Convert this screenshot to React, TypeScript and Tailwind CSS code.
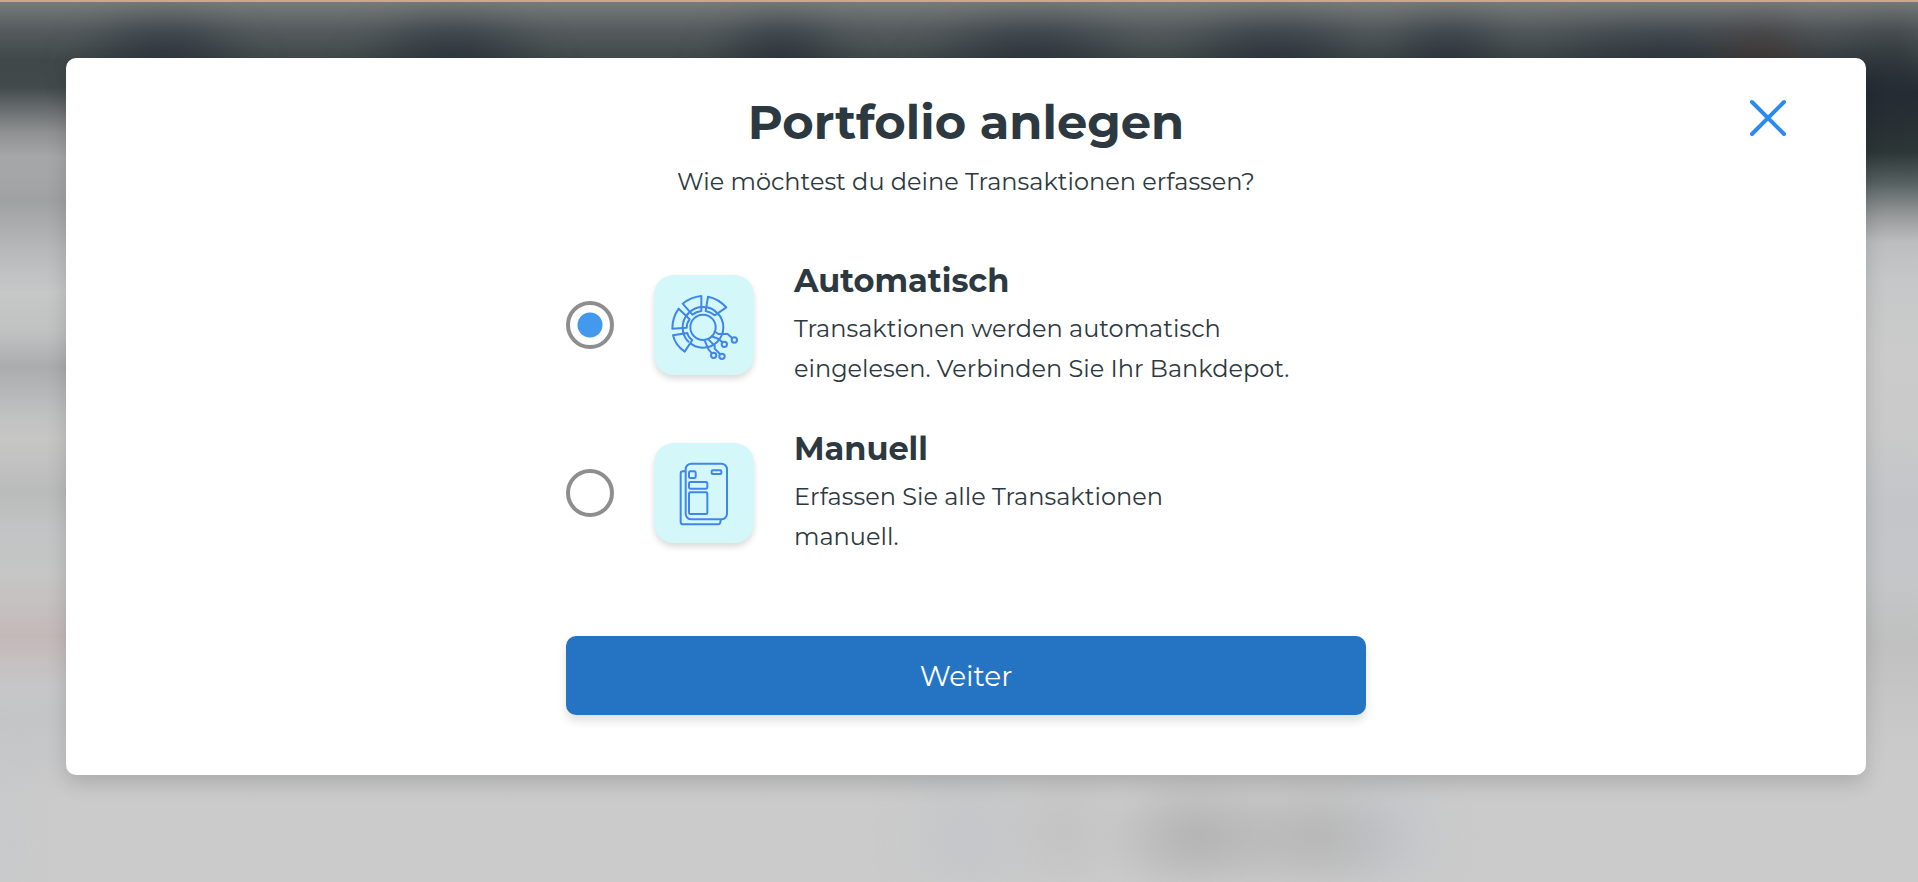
import React from 'react'

type Mode = 'auto' | 'manual'

interface OptionProps {
  id: Mode
  title: string
  lines: string[]
  icon: React.ReactNode
  checked: boolean
  onSelect: (id: Mode) => void
}

function AutoIcon() {
  return (
    <svg viewBox="42 45 300 300" className="size-full" fill="none" stroke="#3f86ea" strokeWidth="6" strokeLinejoin="round" aria-hidden="true">
      <circle cx="189" cy="202" r="38" />
      <circle cx="189" cy="202" r="61" />
      {/* ring segments */}
      <g fill="#d4f7f9">
        <path d="M128 131Q153 111 184 108V153Q169 155 157 164Z" />
        <path d="M204 110Q235 116 259 142L224 166Q213 156 197 153Z" />
        <path d="M116 146Q97 173 97 206L140 203Q140 189 149 178Z" />
        <path d="M99 226Q106 256 134 275L157 240Q144 231 142 219Z" />
      </g>
      <path d="M128 202A61 61 0 0 1 144 161M149 156A61 61 0 0 1 184 141M201 142A61 61 0 0 1 231 158M129 214A61 61 0 0 0 147 247" />
      {/* circuit branches */}
      <path d="M222 213L235 222H263L277 235M213 228L236 237L247 247M205 238L224 257V266L240 282M194 242L206 269L216 280" />
      <circle cx="283" cy="240" r="8" />
      <circle cx="253" cy="253" r="8" />
      <circle cx="221" cy="286" r="8" />
      <circle cx="246" cy="289" r="8" />
    </svg>
  )
}

function ManualIcon() {
  return (
    <svg viewBox="42 40 300 300" className="size-full" fill="none" stroke="#3f86ea" strokeWidth="6" strokeLinejoin="round" aria-hidden="true">
      <rect x="137" y="102" width="124" height="167" rx="17" />
      <path d="M137 125H129Q122 125 122 132V276Q122 284 130 284H234Q242 284 242 270" />
      <rect x="147" y="125" width="20" height="20" rx="4" />
      <rect x="215" y="122" width="29" height="11" rx="3" />
      <rect x="147" y="157" width="55" height="20" rx="4" />
      <rect x="147" y="188" width="55" height="65" rx="4" />
    </svg>
  )
}

function Option({ id, title, lines, icon, checked, onSelect }: OptionProps) {
  return (
    <label htmlFor={id} className="flex items-center gap-10 cursor-pointer">
      <input
        id={id}
        type="radio"
        name="mode"
        checked={checked}
        onChange={() => onSelect(id)}
        className="size-12 shrink-0 appearance-none rounded-full border-4 border-[#8e8e8e] bg-white checked:bg-[radial-gradient(circle,#4299ed_12px,transparent_13px)]"
      />
      <span className="size-25 shrink-0 rounded-[20px] bg-[#d4f7f9] shadow-[0_4px_6px_rgba(0,0,0,0.14)]">{icon}</span>
      <span className="flex flex-col gap-2">
        <span className="text-[32px] leading-10 font-bold">{title}</span>
        <span className="text-2xl leading-10">
          {lines.map((line) => (
            <span key={line} className="block">{line}</span>
          ))}
        </span>
      </span>
    </label>
  )
}

/** Blurred page behind the dialog. */
function Backdrop() {
  return (
    <div className="absolute inset-0 -z-10 overflow-hidden bg-[#cbcbcb]" aria-hidden="true">
      <div className="absolute inset-0 flex justify-between">
        <div className="w-1/2 bg-[linear-gradient(#777b7d_0px,#555b5e_28px,#414849_58px,#434a4c_85px,#8e9091_130px,#a6a7a8_155px,#9fa2a3_200px,#b5b7b9_245px,#c6c8c8_290px,#c0c2c2_330px,#aaacae_365px,#bec0c0_410px,#c6c6c5_435px,#babcbb_490px,#c2c4c5_530px,#c5c6c5_575px,#c4b9b9_635px,#c6c6c8_685px,#c4c5c7_720px,#cbcbcb_800px)]" />
        <div className="w-1/2 bg-[linear-gradient(#777b7d_0px,#555b5e_28px,#414849_58px,#262c33_90px,#2e3938_150px,#566061_180px,#9a9b9c_215px,#bcbdbf_240px,#c6c7c8_280px,#cacbca_350px,#c9cac9_430px,#c3c5c9_500px,#c5c6c8_580px,#bfc0bf_640px,#c5c5c5_690px,#cbcbcb_760px)]" />
      </div>
      <div className="absolute inset-0 bg-[radial-gradient(100px_55px_at_8.6%_62px,#29313a,transparent),radial-gradient(105px_55px_at_23.6%_62px,#29313a,transparent),radial-gradient(80px_55px_at_40.7%_62px,#29313a,transparent),radial-gradient(120px_55px_at_53.8%_62px,#29313a,transparent),radial-gradient(115px_55px_at_66.5%_62px,#29313a,transparent),radial-gradient(80px_55px_at_75.5%_62px,#29313a,transparent),radial-gradient(60px_45px_at_92%_56px,#413634,transparent),radial-gradient(180px_55px_at_87%_66px,#29313a,transparent),radial-gradient(160px_80px_at_100%_85px,#262c33,transparent)] blur-lg" />
      <div className="absolute inset-0 bg-[radial-gradient(100px_65px_at_62.5%_835px,#b1b1b1,transparent),radial-gradient(100px_65px_at_68.5%_835px,#b5b5b5,transparent),radial-gradient(60px_70px_at_55.5%_830px,#c2c2c2,transparent),radial-gradient(80px_120px_at_50.5%_840px,#c4c6c9,transparent),radial-gradient(80px_80px_at_72%_835px,#c2c5ca,transparent),radial-gradient(30px_120px_at_0%_840px,#c4c7ca,transparent)] blur-md" />
    </div>
  )
}

export default function App() {
  const [mode, setMode] = React.useState<Mode>('auto')

  return (
    <div className="relative isolate min-h-screen overflow-hidden border-t-2 border-[#c9aa85] pt-14 pr-[52px] pb-[107px] pl-[66px] font-['Montserrat','Inter',sans-serif] text-[#2d3940]">
      <Backdrop />
      <div role="dialog" aria-labelledby="dialog-title" className="relative rounded-[10px] bg-white px-10 pt-10 pb-15 shadow-[0_8px_20px_rgba(0,0,0,0.15)]">
        <button type="button" aria-label="Schließen" className="absolute top-10 right-[78px] size-10 cursor-pointer">
          <svg viewBox="0 0 40 40" className="size-full" fill="none" stroke="#2b8af0" strokeWidth="4" strokeLinecap="round" aria-hidden="true">
            <path d="M4 4L36 36M36 4L4 36" />
          </svg>
        </button>

        <div className="mx-auto max-w-[800px]">
          <h1 id="dialog-title" className="text-center text-5xl leading-12 font-bold">Portfolio anlegen</h1>
          <p className="mt-4 text-center text-2xl leading-10">Wie möchtest du deine Transaktionen erfassen?</p>

          <div role="radiogroup" aria-labelledby="dialog-title" className="mt-[59px] flex flex-col gap-10">
            <Option
              id="auto"
              title="Automatisch"
              lines={['Transaktionen werden automatisch', 'eingelesen. Verbinden Sie Ihr Bankdepot.']}
              icon={<AutoIcon />}
              checked={mode === 'auto'}
              onSelect={setMode}
            />
            <Option
              id="manual"
              title="Manuell"
              lines={['Erfassen Sie alle Transaktionen', 'manuell.']}
              icon={<ManualIcon />}
              checked={mode === 'manual'}
              onSelect={setMode}
            />
          </div>

          <button type="button" className="mt-[79px] h-[79px] w-full cursor-pointer rounded-[10px] bg-[#2574c4] text-[28px] text-white shadow-[0_6px_10px_rgba(0,0,0,0.12)]">
            Weiter
          </button>
        </div>
      </div>
    </div>
  )
}
